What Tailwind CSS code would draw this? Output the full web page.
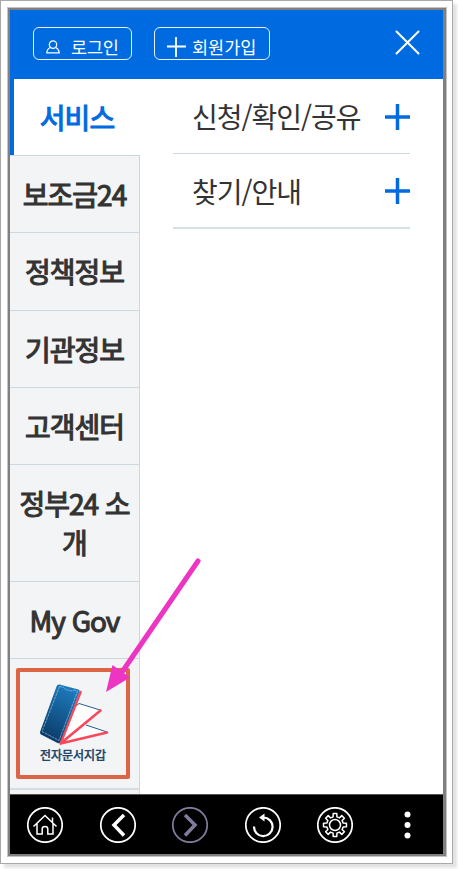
<!DOCTYPE html>
<html lang="ko">
<head>
  <meta charset="UTF-8">
  <meta name="viewport" content="width=device-width, initial-scale=1.0">
  <title>정부24</title>
  <script src="https://cdn.jsdelivr.net/npm/@tailwindcss/browser@4"></script>
</head>
<body class="h-screen overflow-hidden bg-white font-['Noto_Sans_CJK_KR',sans-serif] text-[#333]">
  <div class="relative w-[453px] h-[864px] border border-[#a9a9a9] bg-white p-[6px] shadow-[4px_4px_3px_#e2e2e2]">
    <div class="w-[440px] h-[850px] border border-[#c4c4c4]">
      <div class="flex flex-col w-[438px] h-[848px] border-2 border-r-3 border-[#808080] overflow-hidden">

        <!-- Cabecera -->
        <header class="flex shrink-0 h-[69px] bg-[#006be1] pl-[23px] pt-[17px] text-white">
          <button class="flex items-center w-[99px] h-[33px] rounded-md border border-white/90 pl-3 text-[17.5px] tracking-[-0.2px]">
            <svg class="w-[14px] h-[14px] mt-[6px] mr-[11px]" viewBox="0 0 14 14" fill="none" stroke="currentColor" stroke-width="1.2">
              <circle cx="7" cy="4.6" r="3.7"/>
              <path d="M4.3 7.5C2 8.5 1 10.2 .8 12.8H13.2C13 10.2 12 8.5 9.7 7.5"/>
            </svg>
            <span class="mt-[7px]">로그인</span>
          </button>
          <button class="flex items-center w-[116px] h-[33px] ml-[22px] rounded-md border border-white/90 pl-3 text-[17.5px] tracking-[0px]">
            <svg class="w-[19px] h-[20px] mt-[7px] mr-[6px]" viewBox="0 0 19 20" stroke="currentColor" stroke-width="1.8">
              <path d="M9 0V20M0 9.500H19"/>
            </svg>
            <span class="mt-[7px]">회원가입</span>
          </button>
          <svg class="w-[25px] h-[25px] ml-[125px] mt-[3px]" viewBox="0 0 25 25" stroke="currentColor" stroke-width="2" stroke-linecap="round">
            <path d="M1.5 1.5L23.5 23.5M23.5 1.5L1.5 23.5"/>
          </svg>
        </header>

        <main class="flex flex-1 min-h-0">
          <!-- Menú lateral -->
          <nav class="flex flex-col w-[130px] shrink-0 overflow-hidden text-[28px] leading-[39px] font-normal [-webkit-text-stroke:1.1px] tracking-[-1px] text-center">
            <a class="flex shrink-0 items-center justify-center h-[76px] border-l-4 border-[#006be1] text-[#006be1]">서비스</a>
            <a class="flex shrink-0 items-center justify-center h-[77px] border-t border-r border-[#cdd7de] bg-[#f3f4f6]">보조금24</a>
            <a class="flex shrink-0 items-center justify-center h-[78px] border-t border-r border-[#cdd7de] bg-[#f3f4f6]">정책정보</a>
            <a class="flex shrink-0 items-center justify-center h-[77px] border-t border-r border-[#cdd7de] bg-[#f3f4f6]">기관정보</a>
            <a class="flex shrink-0 items-center justify-center h-[77px] border-t border-r border-[#cdd7de] bg-[#f3f4f6]">고객센터</a>
            <a class="flex shrink-0 items-center justify-center h-[117px] border-t border-r border-[#cdd7de] bg-[#f3f4f6]">정부24 소<br>개</a>
            <a class="flex shrink-0 items-center justify-center h-[77px] border-t border-r border-[#cdd7de] bg-[#f3f4f6]">My Gov</a>
            <a class="shrink-0 h-[130px] border-t border-r border-[#cdd7de] bg-[#f3f4f6] pl-[6px] pt-[9px]">
              <div class="w-[114px] h-[111px] rounded-xs border-4 border-[#dc6546] flex flex-col items-center">
                <svg class="w-[70px] h-[64px] mt-[11px] ml-[1px]" viewBox="39 683 70 64">
                  <defs>
                    <linearGradient id="phone" x1="0.7" y1="0" x2="0.3" y2="1">
                      <stop offset="0" stop-color="#1e7cc0"/>
                      <stop offset="1" stop-color="#0a3a66"/>
                    </linearGradient>
                  </defs>
                  <path d="M60 743L86 725L107 732Z" fill="#fff"/>
                  <path d="M86 725L107 732" stroke="#1e5f8c"/>
                  <path d="M60 742L78 704Q79 703 81 703.5L100 710Z" fill="#fff"/>
                  <path d="M76 706L79 703.5L100 710" fill="none" stroke="#1e5f8c"/>
                  <path d="M80.500 692L60.500 743.500L107 732.500M60.500 743.500L100.500 710.500" fill="none" stroke="#f7485c" stroke-width="2.600" stroke-linecap="round" stroke-linejoin="round"/>
                  <path d="M59.500 684.500L78.500 689.500Q80 690 79.500 691.500L60.500 741Q59.500 744 57.500 743L42 735Q39.500 734 40.200 731.500L56.500 686.500Q57.500 684 59.500 684.500Z" fill="url(#phone)"/>
                  <path d="M59.500 686.500L64 687.500L65.500 689.500L72 691L74 690L77.500 691.500L59 740.500L42 731.500Z" fill="none" stroke="#a9cfe8" stroke-width=".6" stroke-dasharray="3 .7"/>
                </svg>
                <span class="text-[12px] leading-[16px] tracking-[0px] [-webkit-text-stroke:0.5px] text-[#173f66]">전자문서지갑</span>
              </div>
            </a>
            <a class="shrink-0 h-[20px] border-t-2 border-r border-[#d5dde2] bg-[#f3f4f6]"></a>
          </nav>

          <!-- Submenú -->
          <ul class="w-[237px] ml-[33px] text-[28px] leading-[40px] tracking-[-1px]">
            <li class="flex items-center justify-between h-[75px] border-b border-[#cdd7de] pl-[19px]">
              <span>신청/확인/공유</span>
              <svg class="w-[25px] h-[26px] mt-[2px]" viewBox="0 0 25 26" stroke="#006be1" stroke-width="3.5">
                <path d="M12.500 0V26M0 13H25"/>
              </svg>
            </li>
            <li class="flex items-center justify-between h-[75px] border-b-2 border-[#d9e0e5] pl-[19px]">
              <span>찾기/안내</span>
              <svg class="w-[25px] h-[26px] mt-[1px]" viewBox="0 0 25 26" stroke="#006be1" stroke-width="3.5">
                <path d="M12.500 0V26M0 13H25"/>
              </svg>
            </li>
          </ul>
        </main>

        <!-- Barra inferior -->
        <footer class="flex shrink-0 items-center h-[60px] border-t border-[#555] bg-black pl-[17px] gap-[36.5px] text-white">
          <svg class="w-[36px] h-[36px] shrink-0" viewBox="0 0 36 36" fill="none" stroke="currentColor" stroke-width="1.500">
            <circle cx="18" cy="18" r="17.200" stroke-width="1.700"/>
            <path d="M6.500 19.500L18 8.500L29.500 19.500M25.500 15V10.500M10 16.500V27H15.200V22Q15.200 19.500 18 19.500T20.800 22V27H26V16.500"/>
          </svg>
          <svg class="w-[36px] h-[36px] shrink-0" viewBox="0 0 36 36" fill="none" stroke="currentColor">
            <circle cx="18" cy="18" r="17.200" stroke-width="1.700"/>
            <path d="M24 8L14 18L24 28.500" stroke-width="3.500"/>
          </svg>
          <svg class="w-[36px] h-[36px] shrink-0 text-[#817b9c]" viewBox="0 0 36 36" fill="none" stroke="currentColor">
            <circle cx="18" cy="18" r="17.200" stroke-width="1.700"/>
            <path d="M13 8L23 18L13 28.500" stroke-width="3.500"/>
          </svg>
          <svg class="w-[36px] h-[36px] shrink-0" viewBox="0 0 36 36" fill="none" stroke="currentColor">
            <circle cx="18" cy="18" r="17.200" stroke-width="1.700"/>
            <path d="M9 19.500A9.300 9.300 0 1 0 18.500 10.500" stroke-width="2.200"/>
            <path d="M14 10.500L19.500 6.500V14.500Z" fill="currentColor" stroke="none"/>
          </svg>
          <svg class="w-[36px] h-[36px] shrink-0" viewBox="0 0 36 36" fill="none" stroke="currentColor" stroke-width="1.500">
            <circle cx="18" cy="18" r="17.200" stroke-width="1.700"/>
            <circle cx="18" cy="18" r="5.500"/>
            <path id="gear" stroke-linejoin="round"/>
          </svg>
          <svg class="w-[36px] h-[36px] shrink-0" viewBox="0 0 36 36" fill="currentColor">
            <circle cx="17.500" cy="7.500" r="3"/>
            <circle cx="17.500" cy="18" r="3"/>
            <circle cx="17.500" cy="28.500" r="3"/>
          </svg>
        </footer>
      </div>
    </div>

    <!-- Flecha -->
    <svg class="absolute left-[99px] top-[550px] w-[110px] h-[150px]" viewBox="100 551 110 150" fill="#ee34c3">
      <path d="M198 561L120 675" stroke="#ee34c3" stroke-width="5" stroke-linecap="round"/>
      <path d="M106 692L112.500 665L130 677.500Z"/>
    </svg>
  </div>

  <script>
    // Contorno del engranaje: 8 dientes
    const puntos = [];
    for (let i = 0; i < 8; i++) {
      [[-13, 8.4], [-9, 11.6], [9, 11.6], [13, 8.4]].forEach(([grados, r]) => {
        const a = (i * 45 + grados) * Math.PI / 180;
        puntos.push(`${(18 + r * Math.sin(a)).toFixed(2)} ${(18 - r * Math.cos(a)).toFixed(2)}`);
      });
    }
    document.getElementById("gear").setAttribute("d", "M" + puntos.join("L") + "Z");
  </script>
</body>
</html>
